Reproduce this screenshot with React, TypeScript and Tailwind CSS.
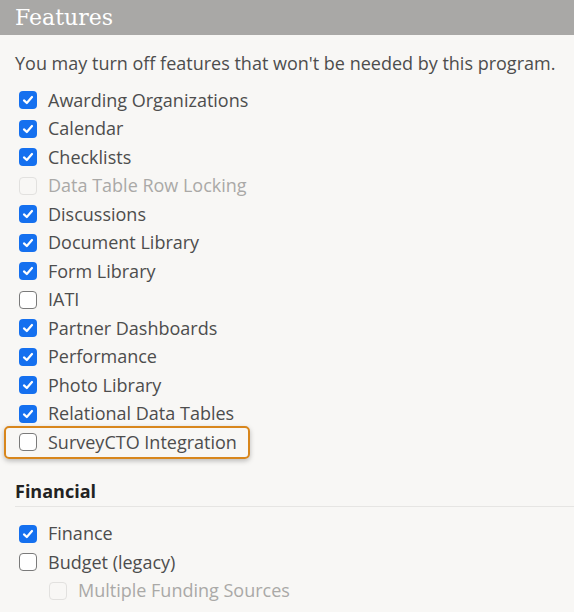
import React from 'react';

type Item = { label: string; checked?: boolean; disabled?: boolean; highlight?: boolean; indent?: boolean };

const features: Item[] = [
  { label: 'Awarding Organizations', checked: true },
  { label: 'Calendar', checked: true },
  { label: 'Checklists', checked: true },
  { label: 'Data Table Row Locking', disabled: true },
  { label: 'Discussions', checked: true },
  { label: 'Document Library', checked: true },
  { label: 'Form Library', checked: true },
  { label: 'IATI' },
  { label: 'Partner Dashboards', checked: true },
  { label: 'Performance', checked: true },
  { label: 'Photo Library', checked: true },
  { label: 'Relational Data Tables', checked: true },
  { label: 'SurveyCTO Integration', highlight: true },
];

const financial: Item[] = [
  { label: 'Finance', checked: true },
  { label: 'Budget (legacy)' },
  { label: 'Multiple Funding Sources', disabled: true, indent: true },
];

const Box = ({ checked, disabled }: { checked?: boolean; disabled?: boolean }) => {
  if (checked) {
    return (
      <span className="flex h-[18px] w-[18px] shrink-0 items-center justify-center rounded-[4px] bg-[#1570ef]">
        <svg width="12" height="12" viewBox="0 0 12 12" fill="none">
          <path d="M2 6.4 4.8 9 10 3" stroke="#fff" strokeWidth="2.2" strokeLinecap="round" strokeLinejoin="round" />
        </svg>
      </span>
    );
  }
  return (
    <span
      className={
        disabled
          ? 'h-[18px] w-[18px] shrink-0 rounded-[4px] border border-[#e2e1df] bg-[#f8f7f5]'
          : 'h-[18px] w-[18px] shrink-0 rounded-[4px] border border-[#7a7a7a] bg-white'
      }
    />
  );
};

const Row = ({ item }: { item: Item }) => {
  const row = (
    <div className={`flex h-[28.5px] items-center gap-[11px] ${item.indent ? 'pl-[34px]' : 'pl-[4px]'}`}>
      <Box checked={item.checked} disabled={item.disabled} />
      <span className={item.disabled ? 'text-[#aaa9a7]' : 'text-[#4d4d4d]'}>{item.label}</span>
    </div>
  );
  if (item.highlight) {
    return (
      <div className="-ml-[11px] -my-[2px] w-[246px] rounded-[5px] border-2 border-[#d8861c] pl-[9px] shadow-[0_2px_5px_rgba(0,0,0,0.25)]">
        {row}
      </div>
    );
  }
  return row;
};

export default function App() {
  return (
    <div className="min-h-[612px] w-[574px] bg-[#f8f7f5] text-[18px]" style={{ fontFamily: '"Open Sans", sans-serif' }}>
      <div className="flex h-[35px] items-center bg-[#a9a8a6] px-[15px]">
        <h1 className="text-[22px] leading-none text-white" style={{ fontFamily: '"DejaVu Serif", serif' }}>
          Features
        </h1>
      </div>
      <div className="px-[15px] pt-[15px]">
        <p className="text-[#4d4d4d] leading-[26px]">You may turn off features that won't be needed by this program.</p>
        <div className="mt-[10px]">
          {features.map((f) => (
            <Row key={f.label} item={f} />
          ))}
        </div>
        <h2 className="mt-[21px] font-bold text-[#222] leading-[26px]">Financial</h2>
        <div className="-mr-[15px] mt-[2px] border-t border-[#e6e5e3] pt-[13px]">
          {financial.map((f) => (
            <Row key={f.label} item={f} />
          ))}
        </div>
      </div>
    </div>
  );
}
